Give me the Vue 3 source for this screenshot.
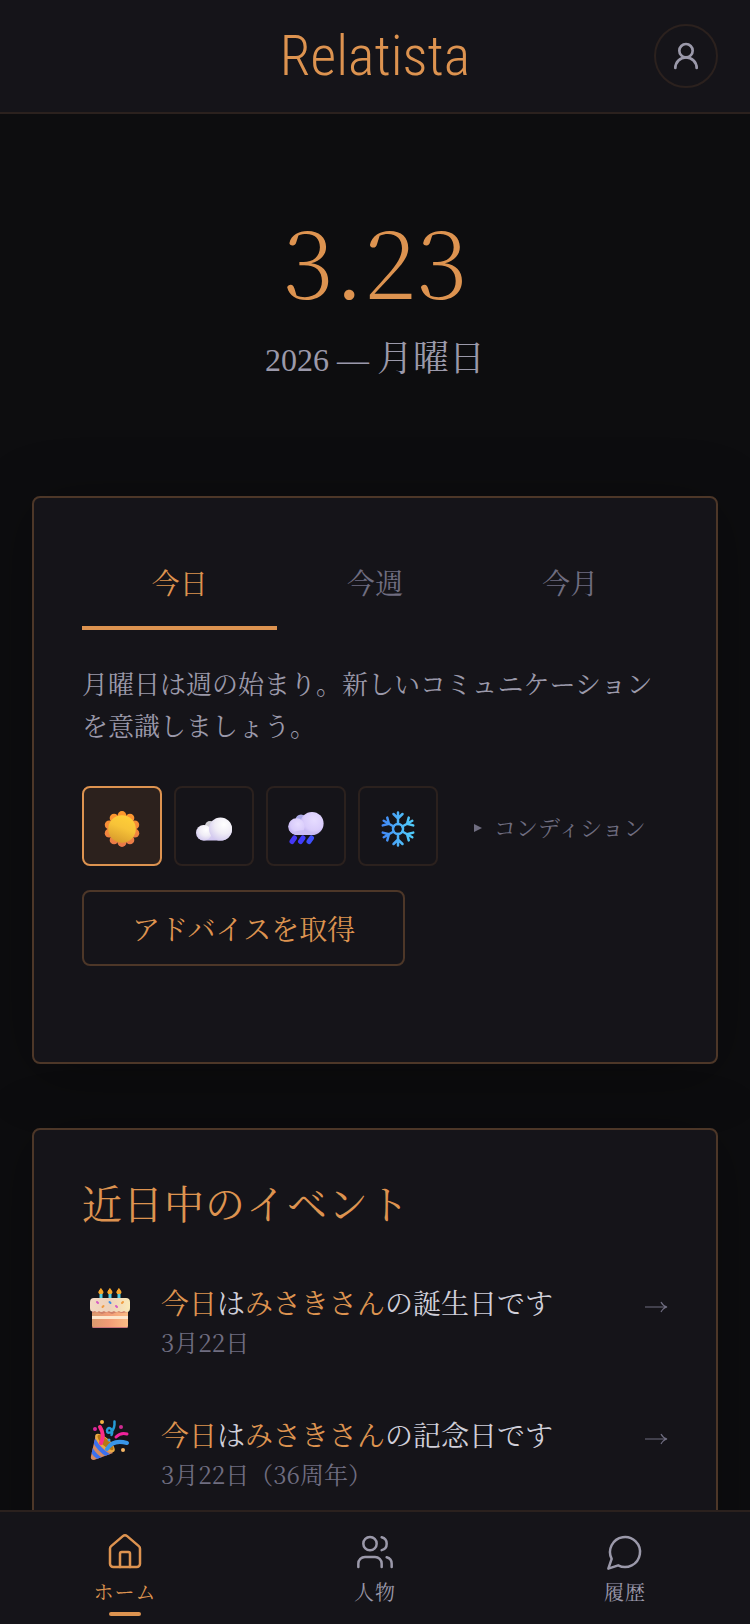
<script setup>
import { ref } from 'vue'

const tabs = ['今日', '今週', '今月']
const activeTab = ref('今日')

const weathers = [
  { id: 'sunny', label: '晴れ' },
  { id: 'cloudy', label: 'くもり' },
  { id: 'rainy', label: '雨' },
  { id: 'snowy', label: '雪' }
]
const weather = ref('sunny')

const events = [
  { id: 1, type: 'birthday', name: 'みさきさん', text: 'の誕生日です', date: '3月22日' },
  { id: 2, type: 'anniversary', name: 'みさきさん', text: 'の記念日です', date: '3月22日（36周年）' }
]

const navItems = [
  { id: 'home', label: 'ホーム' },
  { id: 'people', label: '人物' },
  { id: 'history', label: '履歴' }
]
const page = ref('home')

const petals = Array.from({ length: 10 }, (_, i) => {
  const a = (i * Math.PI) / 5
  return { x: 18 + 13.5 * Math.sin(a), y: 18 - 13.5 * Math.cos(a) }
})
const arms = [0, 60, 120, 180, 240, 300]
</script>

<template>
  <div class="app">
    <header class="header">
      <h1 class="logo">Relatista</h1>
      <button class="avatar" type="button" aria-label="アカウント">
        <svg class="line-icon" viewBox="0 0 24 24" width="32" height="32" stroke-width="2">
          <circle cx="12" cy="8" r="5" />
          <path d="M20 21a8 8 0 0 0-16 0" />
        </svg>
      </button>
    </header>

    <main class="main">
      <section class="today">
        <p class="today-date">3.23</p>
        <p class="today-sub"><span class="today-year">2026 — </span>月曜日</p>
      </section>

      <section class="card advice">
        <div class="tabs" role="tablist">
          <button
            v-for="tab in tabs"
            :key="tab"
            class="tab"
            :class="{ active: tab === activeTab }"
            type="button"
            role="tab"
            :aria-selected="tab === activeTab"
            @click="activeTab = tab"
          >{{ tab }}</button>
        </div>

        <p class="advice-text">月曜日は週の始まり。新しいコミュニケーションを意識しましょう。</p>

        <div class="weather-row">
          <button
            v-for="w in weathers"
            :key="w.id"
            class="weather"
            :class="{ active: w.id === weather }"
            type="button"
            :aria-label="w.label"
            @click="weather = w.id"
          >
            <svg v-if="w.id === 'sunny'" viewBox="0 0 36 36" width="36" height="36">
              <defs>
                <linearGradient id="sunRay" gradientUnits="userSpaceOnUse" x1="0" y1="0" x2="0" y2="36">
                  <stop offset="0" stop-color="#ff9a2c" />
                  <stop offset="1" stop-color="#e8784a" />
                </linearGradient>
                <linearGradient id="sunFace" x1=".7" y1="0" x2=".3" y2="1">
                  <stop offset="0" stop-color="#ffcf38" />
                  <stop offset=".45" stop-color="#f7c338" />
                  <stop offset="1" stop-color="#d79a2c" />
                </linearGradient>
              </defs>
              <g fill="url(#sunRay)">
                <circle v-for="(p, i) in petals" :key="i" :cx="p.x" :cy="p.y" r="4.4" />
              </g>
              <circle cx="18" cy="18" r="13.8" fill="url(#sunFace)" />
            </svg>

            <svg v-else-if="w.id === 'cloudy'" viewBox="0 0 36 36" width="36" height="36">
              <defs>
                <linearGradient id="cloudBase" x1="0" y1="0" x2="0" y2="1">
                  <stop offset="0" stop-color="#f4f2f6" />
                  <stop offset="1" stop-color="#d0c5f0" />
                </linearGradient>
                <radialGradient id="cloudPuff" cx=".65" cy=".3" r=".8">
                  <stop offset="0" stop-color="#ffffff" />
                  <stop offset=".5" stop-color="#f0edf6" />
                  <stop offset="1" stop-color="#cfc5ee" />
                </radialGradient>
              </defs>
              <circle cx="14" cy="15" r="5" fill="#d2d0d6" />
              <path d="M8 29.500a7.500 7.500 0 1 1 4-14l3 2 10-10a11 11 0 0 1 0 22z" fill="url(#cloudBase)" />
              <circle cx="7.800" cy="21.700" r="7.800" fill="url(#cloudPuff)" />
              <circle cx="24.500" cy="18" r="11.500" fill="url(#cloudPuff)" />
            </svg>

            <svg v-else-if="w.id === 'rainy'" viewBox="0 0 36 36" width="36" height="36">
              <defs>
                <radialGradient id="rainPuff" cx=".6" cy=".35" r=".75">
                  <stop offset="0" stop-color="#e6dcff" />
                  <stop offset=".6" stop-color="#d9ccfb" />
                  <stop offset="1" stop-color="#b3a5ea" />
                </radialGradient>
              </defs>
              <circle cx="13" cy="9" r="5.500" fill="#aba9e8" />
              <path d="M8 24a8 8 0 1 1 6-14h12v14z" fill="#cdbff5" />
              <circle cx="24" cy="12.500" r="11.600" fill="url(#rainPuff)" />
              <circle cx="8.500" cy="15.500" r="8.300" fill="url(#rainPuff)" />
              <path d="M4 22q7-4 16-2l7 3-3 1H8z" fill="#cabdf3" />
              <g stroke-width="5" stroke-linecap="round">
                <path d="M6.500 27 4 30.500" stroke="#4638f5" />
                <path d="M15 27 12.500 30.500" stroke="#403cfa" />
                <path d="M23.500 27 21 30.500" stroke="#3f50fb" />
              </g>
            </svg>

            <svg v-else viewBox="0 0 36 36" width="36" height="36">
              <defs>
                <linearGradient id="snow" gradientUnits="userSpaceOnUse" x1="0" y1="0" x2="36" y2="0">
                  <stop offset="0" stop-color="#4080f5" />
                  <stop offset=".55" stop-color="#4db4f8" />
                  <stop offset="1" stop-color="#50d0fa" />
                </linearGradient>
              </defs>
              <mask id="snowMask">
                <g stroke="#fff" stroke-width="2.500" stroke-linecap="round" fill="none">
                  <circle cx="18" cy="18" r="5" />
                  <path
                    v-for="a in arms"
                    :key="a"
                    d="M18 13V1.500M13.500 3 18 7.500l4.500-4.500"
                    :transform="`rotate(${a} 18 18)`"
                  />
                </g>
              </mask>
              <rect width="36" height="36" fill="url(#snow)" mask="url(#snowMask)" />
            </svg>
          </button>

          <button class="condition" type="button">
            <svg class="condition-mark" viewBox="0 0 8 8" width="8" height="8"><path d="M0 0 8 4 0 8z" /></svg>
            <span>コンディション</span>
          </button>
        </div>

        <button class="advice-button" type="button">アドバイスを取得</button>
      </section>

      <section class="card">
        <h2 class="card-title">近日中のイベント</h2>
        <ul class="events">
          <li v-for="e in events" :key="e.id">
            <a class="event" href="#">
              <span class="event-icon">
                <svg v-if="e.type === 'birthday'" viewBox="0 0 40 40" width="40" height="40">
                  <defs>
                    <linearGradient id="cake" x1="0" y1="0" x2="1" y2="0">
                      <stop offset="0" stop-color="#d99a6d" />
                      <stop offset=".45" stop-color="#f19b76" />
                      <stop offset="1" stop-color="#fbbd85" />
                    </linearGradient>
                    <linearGradient id="icing" x1="0" y1="0" x2="1" y2="0">
                      <stop offset="0" stop-color="#f3d9c4" />
                      <stop offset=".5" stop-color="#eed2bb" />
                      <stop offset="1" stop-color="#faeab8" />
                    </linearGradient>
                  </defs>
                  <path d="M11 5v6M20 5v6M29 5v6" stroke="#52cce0" stroke-width="3" />
                  <path d="M11 0q5 6 0 6t0-6M20 0q5 6 0 6t0-6M29 0q5 6 0 6t0-6" fill="#f6a62c" />
                  <path d="M11 0q-5 6 0 6zM20 0q-5 6 0 6zM29 0q-5 6 0 6z" fill="#f6a62c" />
                  <path d="M2 20h36v18a2 2 0 0 1-2 2H4a2 2 0 0 1-2-2z" fill="url(#cake)" />
                  <path d="M2 28h36v3H2z" fill="#fde6cc" />
                  <path d="M2 39h36q-1 1-2 1H4q-1 0-2-1z" fill="#c9727b" />
                  <path d="M2 22h36v2l-6 1-5-1-5 2-5-2-5 2-5-2-5 1z" fill="#cf8068" />
                  <path d="M4 10h32q4 0 4 4v6q0 4-3 4-2 0-3-1-3 2-5 0-3 2-5 0-3 2-5 0-3 2-5 0-3 2-5 0-2 2-4 0-5 2-5-3v-6q0-4 4-4z" fill="url(#icing)" />
                  <g stroke-width="2" stroke-linecap="round">
                    <path d="m7 14 1 1M26 18l1 1" stroke="#d45bc4" />
                    <path d="m19.500 14 1 1" stroke="#3c8fe6" />
                    <path d="m12.500 19 1-1M32 15l1-1" stroke="#ef9c42" />
                  </g>
                </svg>

                <svg v-else viewBox="0 0 40 40" width="40" height="40">
                  <defs>
                    <clipPath id="cone"><path d="M6 14 1 36q-1 4 3 4l19-7z" /></clipPath>
                  </defs>
                  <g clip-path="url(#cone)">
                    <path d="M0 10h30v30H0z" fill="#d58a63" />
                    <path d="M4 20q5 10 15 16M1 29q4 7 11 11" stroke="#3c70ee" stroke-width="4" fill="none" />
                  </g>
                  <ellipse cx="15" cy="23" rx="5" ry="12.500" transform="rotate(-47 15 23)" fill="#eaab45" />
                  <ellipse cx="15.500" cy="22.500" rx="3.500" ry="10.500" transform="rotate(-47 15.500 22.500)" fill="#b87712" />
                  <g fill="none" stroke-width="3" stroke-linecap="round">
                    <path d="M10 7q5 8 1 16" stroke="#fb2c86" stroke-width="4" />
                    <path d="M17 29q6-10 20-6" stroke="#3995e8" stroke-width="4" />
                    <path d="M26 17q5-5 11-3" stroke="#ef239c" />
                    <path d="M24.500 1.500Q25 9 21 12q-4 2-4-1.500 1-4 4-1.500 2 3 .500 6" stroke="#259bd5" stroke-width="2.500" />
                  </g>
                  <circle cx="12" cy="2" r="2" fill="#f2b344" />
                  <circle cx="5" cy="9" r="2" fill="#d8269b" />
                  <circle cx="31" cy="7" r="2" fill="#cc2b91" />
                  <circle cx="19" cy="20" r="1.500" fill="#3aa5e5" />
                  <circle cx="33" cy="30" r="2" fill="#f5b565" />
                </svg>
              </span>
              <span class="event-body">
                <span class="event-title"><em>今日</em>は<em>{{ e.name }}</em>{{ e.text }}</span>
                <span class="event-date">{{ e.date }}</span>
              </span>
              <svg class="event-arrow" viewBox="0 0 24 12" width="24" height="12">
                <path d="M1 6h22M17 1q2 4 6 5-4 1-6 5" />
              </svg>
            </a>
          </li>
        </ul>
      </section>
    </main>

    <nav class="nav">
      <a
        v-for="item in navItems"
        :key="item.id"
        class="nav-item"
        :class="{ active: item.id === page }"
        href="#"
        @click.prevent="page = item.id"
      >
        <svg class="line-icon" viewBox="0 0 24 24" width="40" height="40" stroke-width="1.5">
          <template v-if="item.id === 'home'">
            <path d="M15 21v-8a1 1 0 0 0-1-1h-4a1 1 0 0 0-1 1v8" />
            <path d="M3 10a2 2 0 0 1 .709-1.528l7-5.999a2 2 0 0 1 2.582 0l7 5.999A2 2 0 0 1 21 10v9a2 2 0 0 1-2 2H5a2 2 0 0 1-2-2z" />
          </template>
          <template v-else-if="item.id === 'people'">
            <path d="M16 21v-2a4 4 0 0 0-4-4H6a4 4 0 0 0-4 4v2" />
            <circle cx="9" cy="7" r="4" />
            <path d="M22 21v-2a4 4 0 0 0-3-3.870" />
            <path d="M16 3.130a4 4 0 0 1 0 7.750" />
          </template>
          <path v-else d="M7.900 20A9 9 0 1 0 4 16.100L2 22Z" />
        </svg>
        <span>{{ item.label }}</span>
      </a>
    </nav>
  </div>
</template>

<style>
body {
  background: #0d0d0f;
}
</style>

<style scoped>
.app {
  display: flex;
  flex-direction: column;
  height: 100vh;
  background: #0d0d0f;
  color: #9b99aa;
  font-family: "Noto Serif CJK JP", "Noto Serif JP", "Liberation Serif", "Noto Sans CJK JP", serif;
  font-weight: 400;
}

button {
  margin: 0;
  padding: 0;
  background: none;
  border: none;
  color: inherit;
  font: inherit;
  cursor: pointer;
}

a {
  color: inherit;
  text-decoration: none;
}

h1,
h2,
p,
ul {
  margin: 0;
  padding: 0;
  font-weight: 400;
}

.line-icon {
  display: block;
  fill: none;
  stroke: currentColor;
  stroke-linecap: round;
  stroke-linejoin: round;
}

.header {
  display: grid;
  grid-template-columns: 1fr auto 1fr;
  align-items: center;
  flex-shrink: 0;
  padding: 24px 32px;
  background: #151419;
  border-bottom: 2px solid #2b211e;
}

.logo {
  grid-column: 2;
  color: #dd9350;
  font-family: "Roboto Condensed", "Liberation Sans Narrow", "Noto Sans CJK JP", sans-serif;
  font-size: 56px;
  font-weight: 300;
  line-height: 64px;
}

.avatar {
  display: flex;
  align-items: center;
  justify-content: center;
  justify-self: end;
  box-sizing: border-box;
  width: 64px;
  height: 64px;
  border: 2px solid #2b211e;
  border-radius: 50%;
}

.main {
  flex: 1;
  min-height: 0;
  padding: 0 32px;
  overflow-y: auto;
  scrollbar-width: none;
}

.today {
  padding: 92px 0 116px;
  text-align: center;
}

.today-date {
  color: #dd9350;
  font-size: 96px;
  font-weight: 200;
  line-height: 104px;
}

.today-sub {
  margin-top: 22px;
  font-size: 36px;
  line-height: 48px;
}

.today-year {
  font-family: "Liberation Serif", serif;
  font-size: 32px;
  line-height: 32px;
}

.card {
  margin-bottom: 64px;
  padding: 48px;
  background: #151419;
  border: 2px solid #4d3728;
  border-radius: 8px;
  box-shadow: 0 8px 64px rgba(0, 0, 0, 0.3);
}

.advice {
  padding-bottom: 96px;
}

.tabs {
  display: grid;
  grid-template-columns: repeat(3, 1fr);
}

.tab {
  padding: 14px 0 22px;
  border-bottom: 4px solid transparent;
  color: #6f6d80;
  font-size: 28px;
  line-height: 44px;
}

.tab.active {
  border-color: #dd9350;
  color: #dd9350;
}

.advice-text {
  margin: 32px 0 40px;
  font-size: 26px;
  line-height: 42px;
}

.weather-row {
  display: flex;
  gap: 12px;
}

.weather {
  display: flex;
  align-items: center;
  justify-content: center;
  box-sizing: border-box;
  width: 80px;
  height: 80px;
  padding-top: 6px;
  border: 2px solid #2b211e;
  border-radius: 8px;
}

.weather.active {
  background: #2c211d;
  border-color: #dd9350;
}

.condition {
  display: flex;
  align-items: center;
  gap: 12px;
  padding-left: 24px;
  color: #6f6d80;
  font-size: 22px;
}

.condition-mark {
  margin-top: 4px;
  fill: currentColor;
}

.advice-button {
  display: block;
  margin-top: 24px;
  padding: 0 48px;
  border: 2px solid #4d3728;
  border-radius: 8px;
  color: #dd9350;
  font-size: 28px;
  line-height: 72px;
}

.card-title {
  margin-bottom: 32px;
  color: #dd9350;
  font-size: 40px;
  letter-spacing: 1px;
  line-height: 48px;
}

.events {
  list-style: none;
}

.event {
  display: flex;
  gap: 24px;
  padding: 24px 0 28px;
}

.event-icon {
  display: flex;
  justify-content: center;
  width: 55px;
  padding-top: 6px;
}

.event-body {
  display: flex;
  flex: 1;
  flex-direction: column;
  line-height: 40px;
}

.event-title {
  color: #d0cfd9;
  font-size: 28px;
}

.event-title em {
  color: #dd9350;
  font-style: normal;
}

.event-date {
  color: #6f6d80;
  font-size: 24px;
}

.event-arrow {
  margin-top: 19px;
  fill: none;
  stroke: #6f6d80;
  stroke-width: 1.2;
}

.nav {
  display: grid;
  grid-template-columns: repeat(3, 1fr);
  flex-shrink: 0;
  background: #151419;
  border-top: 2px solid #2b211e;
}

.nav-item {
  position: relative;
  display: flex;
  flex-direction: column;
  align-items: center;
  gap: 6px;
  padding: 20px 0 18px;
  font-size: 20px;
  letter-spacing: 1px;
  line-height: 28px;
}

.nav-item.active {
  color: #dd9350;
}

.nav-item.active::after {
  content: "";
  position: absolute;
  bottom: 8px;
  width: 32px;
  height: 4px;
  border-radius: 2px;
  background: #dd9350;
}
</style>
